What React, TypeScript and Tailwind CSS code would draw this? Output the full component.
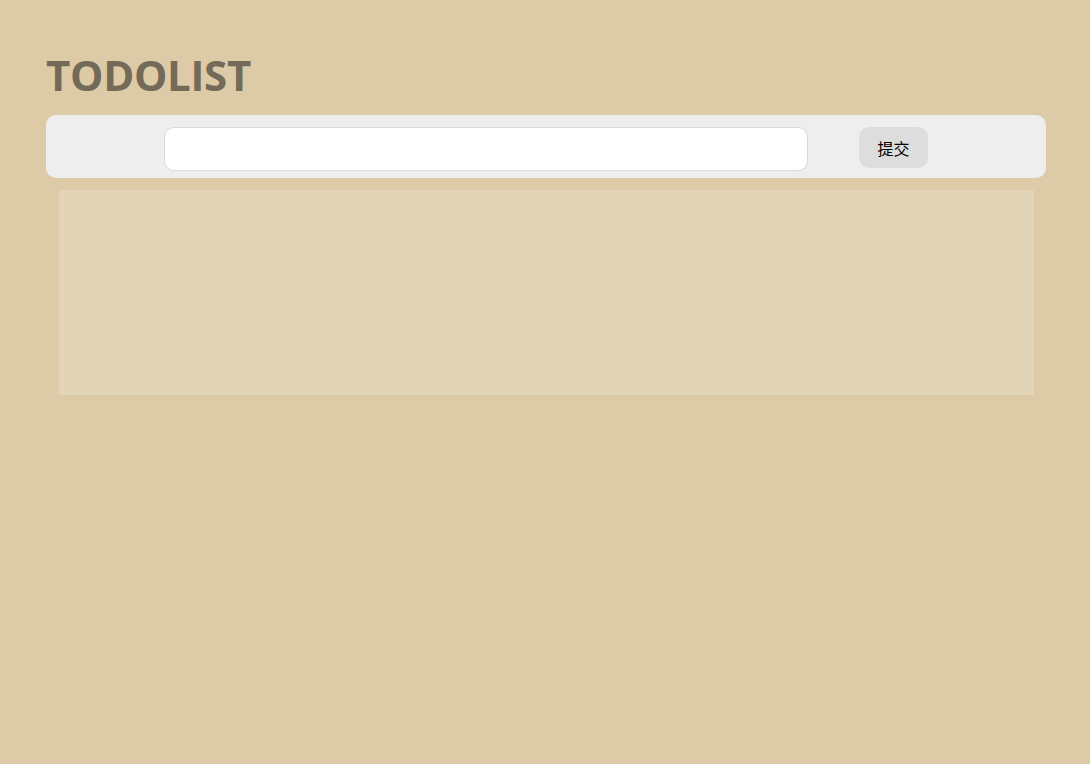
import React, { useState } from 'react';

export default function App() {
  const [text, setText] = useState('');
  const [todos, setTodos] = useState<string[]>([]);

  const handleSubmit = (e: React.FormEvent) => {
    e.preventDefault();
    if (!text.trim()) return;
    setTodos([...todos, text.trim()]);
    setText('');
  };

  return (
    <div
      className="min-h-[764px] bg-[#ddcaa7] pt-[46px]"
      style={{ fontFamily: '"Open Sans", "Noto Sans CJK SC", sans-serif' }}
    >
      <div className="ml-[46px] w-[1000px]">
        <h1 className="m-0 text-[42px] font-bold leading-[58px] tracking-[-0.3px] text-[#736a58]">
          TODOLIST
        </h1>
        <form
          onSubmit={handleSubmit}
          className="mt-[11px] flex h-[63px] items-start rounded-[10px] bg-[#eeeeee] pl-[118px] pt-[12px]"
        >
          <input
            value={text}
            onChange={(e) => setText(e.target.value)}
            className="h-[44px] w-[644px] rounded-[10px] border border-[#d9d9d9] bg-white px-3 text-base outline-none"
          />
          <button
            type="submit"
            className="ml-[51px] h-[41px] w-[69px] rounded-[10px] bg-[#dddddd] text-base text-black"
            style={{ fontFamily: '"Noto Sans CJK SC", sans-serif' }}
          >
            提交
          </button>
        </form>
        <ul className="mx-[13px] mt-[12px] h-[205px] w-[975px] bg-[#e2d4b7]">
          {todos.map((t, i) => (
            <li key={i} className="px-4 py-2 text-[#736a58]">
              {t}
            </li>
          ))}
        </ul>
      </div>
    </div>
  );
}
